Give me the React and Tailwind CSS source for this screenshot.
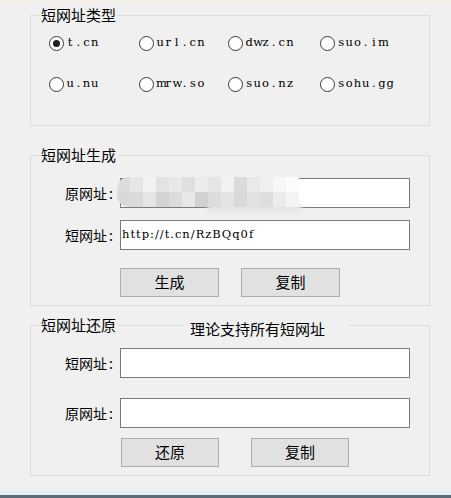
import React from "react";

const CJK = "font-['Noto_Sans_CJK_SC','Noto_Sans',sans-serif]";
const SERIF = "font-['DejaVu_Serif','Liberation_Serif',serif]";

function MonoText({ text, cell }) {
  return (
    <span className={`${SERIF} text-[11.5px] text-black leading-none whitespace-nowrap flex`}>
      {text.split("").map((ch, i) => (
        <span key={i} className={`inline-block ${cell} text-center`}>
          {ch}
        </span>
      ))}
    </span>
  );
}

function Radio({ label, checked }) {
  return (
    <div className="flex items-center h-[20px]">
      <span className="w-[15px] h-[15px] shrink-0 rounded-full border-[1.5px] border-[#3a3a3a] bg-white flex items-center justify-center">
        {checked && <span className="w-[7px] h-[7px] rounded-full bg-[#1f1f1f]" />}
      </span>
      <span className="ml-[2px]">
        <MonoText text={label} cell="w-[8.2px]" />
      </span>
    </div>
  );
}

function Group({ title, heightClass, children, extra }) {
  return (
    <div className={`relative ml-[30px] w-[400px] ${heightClass} border border-[#dcdcdc]`}>
      <span className={`${CJK} absolute left-[8px] top-[-11px] px-[2px] bg-[#f0f0f0] text-[15px] leading-[20px] text-black`}>
        {title}
      </span>
      {extra}
      {children}
    </div>
  );
}

function Field({ label, value, mosaic }) {
  return (
    <div className="relative flex items-center h-[30px]">
      <div className={`${CJK} w-[84px] flex justify-end items-center text-[14px] text-black leading-none`}>
        <span>{label}</span>
        <span className="ml-[2px] mr-[2px]">:</span>
      </div>
      <div className="ml-[5px] w-[290px] h-[30px] bg-white border border-[#7a7a7a] flex items-center overflow-hidden">
        {value ? (
          <span className={`${SERIF} text-[11.5px] tracking-[1px] text-black leading-none whitespace-nowrap pl-[1px]`}>
            {value}
          </span>
        ) : null}
      </div>
      {mosaic}
    </div>
  );
}

function Btn({ label, w }) {
  return (
    <div className={`${CJK} ${w} h-[29px] bg-[#e1e1e1] border border-[#adadad] flex items-center justify-center text-[15px] text-black`}>
      {label}
    </div>
  );
}

const row1 = [
  "bg-[#dcdcdc]", "bg-[#e6e6e6]", "bg-[#f2f2f2]", "bg-[#e3e3e3]", "bg-[#e8e8e8]", "bg-[#dfdfdf]", "bg-[#ececec]",
  "bg-[#e5e5e5]", "bg-[#f1f1f1]", "bg-[#dbdbdb]", "bg-[#e9e9e9]", "bg-[#efefef]", "bg-[#f7f7f7]", "bg-[#fbfbfb]",
];
const row2 = [
  "bg-[#d8d8d8]", "bg-[#dadada]", "bg-[#e6e6e6]", "bg-[#d3d3d3]", "bg-[#dcdcdc]", "bg-[#e8e8e8]", "bg-[#d1d1d1]",
  "bg-[#dcdcdc]", "bg-[#e4e4e4]", "bg-[#d8d8d8]", "bg-[#e2e2e2]", "bg-[#dedede]", "bg-[#ebebeb]", "bg-[#f4f4f4]",
];

function Mosaic() {
  return (
    <div className="absolute left-[86px] top-[-1px] w-[182px] h-[37px] pointer-events-none">
      <div className="absolute left-[90px] top-[26px] w-[95px] h-[10px] rounded-full bg-[#e6e6e6] blur-[2px]" />
      <div className="absolute left-0 top-0 w-[182px] h-[30px] rounded-l-[12px] overflow-hidden grid grid-cols-[repeat(14,13px)] grid-rows-[15px_15px] blur-[0.6px]">
        {row1.map((c, i) => (
          <div key={"a" + i} className={c} />
        ))}
        {row2.map((c, i) => (
          <div key={"b" + i} className={c} />
        ))}
      </div>
    </div>
  );
}

export default function App() {
  return (
    <div className={`${CJK} w-[451px] h-[498px] bg-[#f0f0f0] flex flex-col overflow-hidden`}>
      <div className="h-[2px] bg-[#f6efe8] shrink-0" />
      <div className="h-[13px] shrink-0" />

      <Group title="短网址类型" heightClass="h-[111px]">
        <div className="pt-[17px] pl-[18px] grid grid-cols-[90px_89px_92px_1fr] gap-y-[21px]">
          <Radio label="t.cn" checked />
          <Radio label="url.cn" />
          <Radio label="dwz.cn" />
          <Radio label="suo.im" />
          <Radio label="u.nu" />
          <Radio label="mrw.so" />
          <Radio label="suo.nz" />
          <Radio label="sohu.gg" />
        </div>
      </Group>

      <div className="h-[29px] shrink-0" />

      <Group title="短网址生成" heightClass="h-[151px]">
        <div className="pt-[22px] flex flex-col">
          <Field label="原网址" value="" mosaic={<Mosaic />} />
          <div className="h-[12px]" />
          <Field label="短网址" value="http://t.cn/RzBQq0f" />
          <div className="ml-[89px] mt-[18px] flex gap-[22px]">
            <Btn label="生成" w="w-[99px]" />
            <Btn label="复制" w="w-[99px]" />
          </div>
        </div>
      </Group>

      <div className="h-[19px] shrink-0" />

      <Group
        title="短网址还原"
        heightClass="h-[151px]"
        extra={
          <span className={`${CJK} absolute left-[153px] top-[-7px] w-[165px] pl-[6px] bg-[#f0f0f0] text-[15px] leading-[20px] text-black`}>
            理论支持所有短网址
          </span>
        }
      >
        <div className="pt-[22px] flex flex-col">
          <Field label="短网址" value="" />
          <div className="h-[20px]" />
          <Field label="原网址" value="" />
          <div className="ml-[90px] mt-[10px] flex gap-[32px]">
            <Btn label="还原" w="w-[98px]" />
            <Btn label="复制" w="w-[98px]" />
          </div>
        </div>
      </Group>

      <div className="flex-1" />
      <div className="h-[5px] bg-[#e7edf4] shrink-0" />
      <div className="h-[3px] bg-[#5d6b79] shrink-0" />
    </div>
  );
}
